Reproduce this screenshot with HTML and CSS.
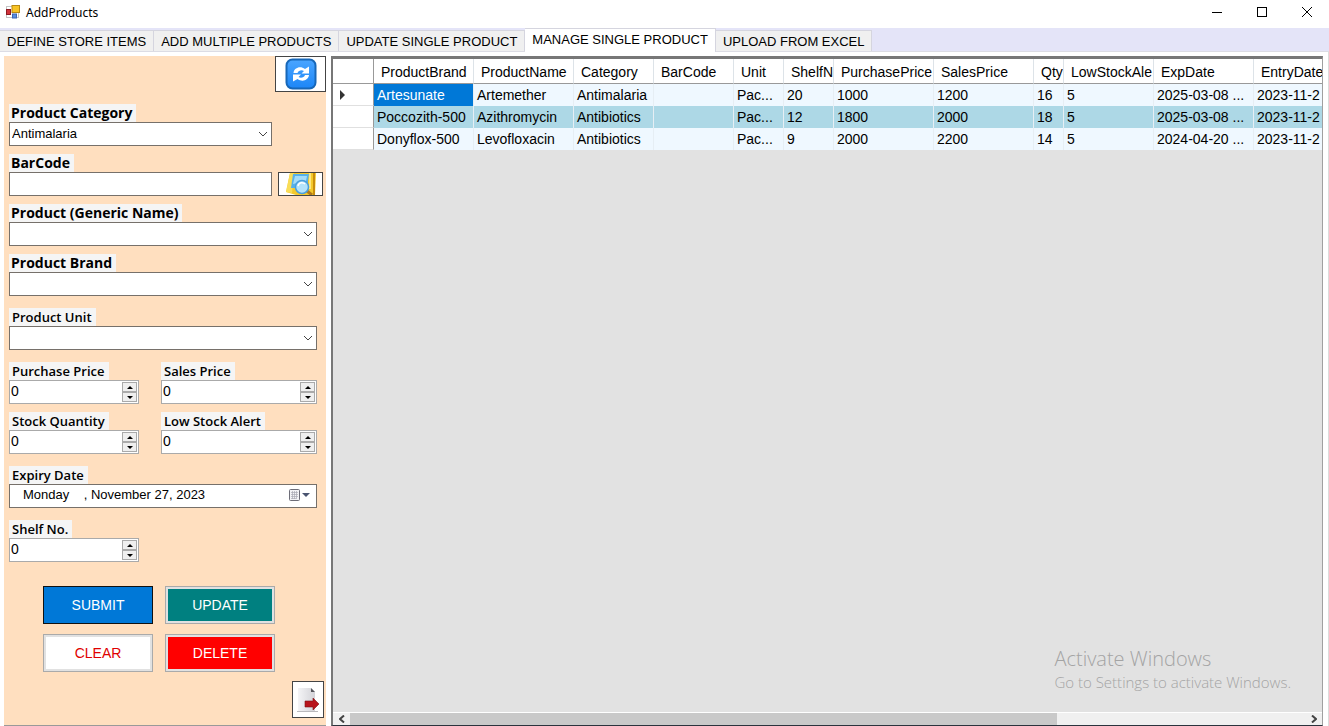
FILE: index.html
```html
<!DOCTYPE html>
<html lang="en">
<head>
  <meta charset="UTF-8">
  <title>AddProducts</title>
  <link rel="stylesheet" href="styles.css">
</head>
<body>
  <!-- Title bar -->
  <header class="titlebar">
    <svg class="app-icon" width="14" height="14" viewBox="0 0 14 14">
      <rect x="0.5" y="1.5" width="12" height="11" fill="#fff" stroke="#c4c4c4"/>
      <rect x="6" y="0.5" width="7.5" height="7" fill="#f7c325" stroke="#b98a12"/>
      <rect x="0.5" y="4.5" width="4" height="5" fill="#d2343c" stroke="#8e1b22"/>
      <rect x="6.5" y="9" width="4" height="4" fill="#5b8de0" stroke="#3a66b4"/>
    </svg>
    <h1>AddProducts</h1>
    <div class="window-buttons">
      <button type="button" aria-label="Minimize"><svg width="10" height="10"><path d="M0 5.5H10" stroke="#000"/></svg></button>
      <button type="button" aria-label="Maximize"><svg width="10" height="10"><rect x="0.5" y="0.5" width="9" height="9" fill="none" stroke="#000"/></svg></button>
      <button type="button" aria-label="Close"><svg width="10" height="10"><path d="M0 0L10 10M10 0L0 10" stroke="#000"/></svg></button>
    </div>
  </header>

  <!-- Tabs -->
  <nav class="tabs">
    <button type="button" class="tab">DEFINE STORE ITEMS</button>
    <button type="button" class="tab">ADD MULTIPLE PRODUCTS</button>
    <button type="button" class="tab">UPDATE SINGLE PRODUCT</button>
    <button type="button" class="tab active">MANAGE SINGLE PRODUCT</button>
    <button type="button" class="tab">UPLOAD FROM EXCEL</button>
  </nav>

  <main class="page">
    <!-- Product form -->
    <form class="panel">
      <button type="button" class="icon-btn refresh" aria-label="Refresh">
        <svg width="32" height="32" viewBox="0 0 32 32">
          <defs>
            <linearGradient id="blue" x1="0" y1="0" x2="0" y2="1">
              <stop offset="0" stop-color="#4aa5ff"/>
              <stop offset="1" stop-color="#1c86f7"/>
            </linearGradient>
          </defs>
          <rect x="1.5" y="1.5" width="29" height="29" rx="6" fill="url(#blue)" stroke="#1767b8" stroke-width="2"/>
          <path d="M8.500 15C9 10 15 7.500 20 11L24 8.500V15.500H16.500L19 13C16.500 11.500 13.500 12.500 12.500 15Z" fill="#fff"/>
          <path d="M24 17C23.500 22 17.500 24.500 12.500 21L8 23.500V16.500H16L13.500 19C16 20.500 19 19.500 20 17Z" fill="#fff"/>
        </svg>
      </button>

      <div class="field">
        <label class="wide" for="category">Product Category</label>
        <select id="category" class="short"><option>Antimalaria</option></select>
      </div>
      <div class="field">
        <label class="wide" for="barcode">BarCode</label>
        <div class="row">
          <input type="text" id="barcode" class="short">
          <button type="button" class="icon-btn scan" aria-label="Find barcode">
            <svg width="34" height="22" viewBox="0 0 34 22">
              <path d="M6 0H32L31 22H12L2 19Z" fill="#f4c92c"/>
              <path d="M6 0L2 19L8 20L10 0Z" fill="#f9dd58"/>
              <path d="M9 1H25L23 15H7Z" fill="#56b1ea"/>
              <path d="M11 3H23L22 8L9 11Z" fill="#a5dcf8"/>
              <path d="M26 0V16" stroke="#fff0a0" stroke-width="1.500"/>
              <path d="M30 0V22" stroke="#c98e0c" stroke-width="2"/>
              <path d="M23 18L28 22" stroke="#b07a1c" stroke-width="3"/>
              <circle cx="18" cy="14" r="6.500" fill="#b4e3fb" stroke="#4a9fdc" stroke-width="1.500"/>
              <path d="M14 13C15 9 19 9 21 11" fill="none" stroke="#fff" stroke-width="1.500"/>
            </svg>
          </button>
        </div>
      </div>
      <div class="field">
        <label class="wide" for="generic">Product (Generic Name)</label>
        <select id="generic"><option></option></select>
      </div>
      <div class="field roomy">
        <label class="wide" for="brand">Product Brand</label>
        <select id="brand"><option></option></select>
      </div>
      <div class="field roomy">
        <label for="unit">Product Unit</label>
        <select id="unit"><option></option></select>
      </div>
      <div class="pair">
        <div class="field">
          <label for="purchase">Purchase Price</label>
          <div class="spin">
            <input type="number" id="purchase" value="0">
            <div class="arrows">
              <button type="button" class="up" aria-label="Increase"></button>
              <button type="button" class="down" aria-label="Decrease"></button>
            </div>
          </div>
        </div>
        <div class="field">
          <label for="sales">Sales Price</label>
          <div class="spin">
            <input type="number" id="sales" value="0">
            <div class="arrows">
              <button type="button" class="up" aria-label="Increase"></button>
              <button type="button" class="down" aria-label="Decrease"></button>
            </div>
          </div>
        </div>
      </div>
      <div class="pair">
        <div class="field roomy">
          <label for="stock">Stock Quantity</label>
          <div class="spin">
            <input type="number" id="stock" value="0">
            <div class="arrows">
              <button type="button" class="up" aria-label="Increase"></button>
              <button type="button" class="down" aria-label="Decrease"></button>
            </div>
          </div>
        </div>
        <div class="field roomy">
          <label for="lowstock">Low Stock Alert</label>
          <div class="spin">
            <input type="number" id="lowstock" value="0">
            <div class="arrows">
              <button type="button" class="up" aria-label="Increase"></button>
              <button type="button" class="down" aria-label="Decrease"></button>
            </div>
          </div>
        </div>
      </div>
      <div class="field roomy">
        <label for="expiry">Expiry Date</label>
        <div class="date">
          <input type="text" id="expiry" value="Monday    , November 27, 2023">
          <button type="button" aria-label="Open calendar">
            <svg width="22" height="14" viewBox="0 0 22 14">
              <rect x="0.5" y="1.500" width="10" height="11" rx="1" fill="#f3f3f6" stroke="#6d6d78"/>
              <path d="M2 4.500H9M2 6.500H9M2 8.500H9M2 10.500H7M3.500 3V11M5.500 3V11M7.500 3V11" stroke="#a9a9b4" stroke-width="0.700"/>
              <path d="M13 5H21L17 9Z" fill="#4a5470"/>
            </svg>
          </button>
        </div>
      </div>
      <div class="pair">
        <div class="field">
          <label for="shelf">Shelf No.</label>
          <div class="spin">
            <input type="number" id="shelf" value="0">
            <div class="arrows">
              <button type="button" class="up" aria-label="Increase"></button>
              <button type="button" class="down" aria-label="Decrease"></button>
            </div>
          </div>
        </div>
      </div>

      <div class="actions">
        <button type="button" class="submit">SUBMIT</button>
        <button type="button" class="update">UPDATE</button>
        <button type="button" class="clear">CLEAR</button>
        <button type="button" class="delete">DELETE</button>
      </div>

      <button type="button" class="icon-btn exit" aria-label="Exit">
        <svg width="24" height="26" viewBox="0 0 24 26">
          <defs>
            <linearGradient id="paper" x1="0" y1="0" x2="1" y2="0">
              <stop offset="0" stop-color="#f4f4f6"/>
              <stop offset="1" stop-color="#d3d3d8"/>
            </linearGradient>
          </defs>
          <path d="M2 1H15L19 5V24H2Z" fill="url(#paper)"/>
          <path d="M15 1L19 5H15Z" fill="#55565c"/>
          <path d="M1 24.500H22" stroke="#b9b9bd"/>
          <path d="M9 14H17V11L23 17L17 23V20H9Z" fill="#b8141b" stroke="#7d1216" stroke-width="0.600"/>
        </svg>
      </button>
    </form>

    <!-- Products grid -->
    <section class="grid">
      <div class="grid-view">
        <table>
          <colgroup>
            <col class="w41"><col class="w100"><col class="w100"><col class="w80"><col class="w80"><col class="w50"><col class="w50">
            <col class="w100"><col class="w100"><col class="w30"><col class="w90"><col class="w100"><col class="w100">
          </colgroup>
          <thead>
            <tr>
              <th></th><th>ProductBrand</th><th>ProductName</th><th>Category</th><th>BarCode</th><th>Unit</th><th>ShelfN</th>
              <th>PurchasePrice</th><th>SalesPrice</th><th>Qty</th><th>LowStockAle</th><th>ExpDate</th><th>EntryDate</th>
            </tr>
          </thead>
          <tbody>
            <tr>
              <th><span class="current"></span></th><td class="selected">Artesunate</td><td>Artemether</td><td>Antimalaria</td><td></td><td>Pac...</td><td>20</td>
              <td>1000</td><td>1200</td><td>16</td><td>5</td><td>2025-03-08 ...</td><td>2023-11-2</td>
            </tr>
            <tr>
              <th></th><td>Poccozith-500</td><td>Azithromycin</td><td>Antibiotics</td><td></td><td>Pac...</td><td>12</td>
              <td>1800</td><td>2000</td><td>18</td><td>5</td><td>2025-03-08 ...</td><td>2023-11-2</td>
            </tr>
            <tr>
              <th></th><td>Donyflox-500</td><td>Levofloxacin</td><td>Antibiotics</td><td></td><td>Pac...</td><td>9</td>
              <td>2000</td><td>2200</td><td>14</td><td>5</td><td>2024-04-20 ...</td><td>2023-11-2</td>
            </tr>
          </tbody>
        </table>
      </div>
      <div class="scrollbar">
        <button type="button" aria-label="Scroll left"><svg width="6" height="8"><path d="M5 0.500L1 4L5 7.500" fill="none" stroke="#444" stroke-width="2"/></svg></button>
        <div class="track"><div class="thumb"></div></div>
        <button type="button" aria-label="Scroll right"><svg width="6" height="8"><path d="M1 0.500L5 4L1 7.500" fill="none" stroke="#444" stroke-width="2"/></svg></button>
      </div>
    </section>
  </main>

  <!-- Activation notice lies over the window -->
  <div class="watermark">
    <p class="big">Activate Windows</p>
    <p>Go to Settings to activate Windows.</p>
  </div>
</body>
</html>
```
FILE: styles.css
```css
*{box-sizing:border-box;}
body{margin:0;height:100vh;display:flex;flex-direction:column;overflow:hidden;background:#fff;color:#000;
  font:14px "Liberation Sans",Arial,sans-serif;}
button,input,select{font:inherit;color:inherit;margin:0;padding:0;border-radius:0;}
button{cursor:pointer;}
/* --- Title bar --- */
.titlebar{display:flex;align-items:center;height:28px;padding:0 0 4px 6px;flex:none;}
.titlebar h1{margin:0 0 0 6px;font:12px "Noto Sans","Open Sans",sans-serif;}
.window-buttons{display:flex;margin-left:auto;}
.window-buttons button{width:45px;height:24px;border:0;background:none;display:flex;align-items:center;justify-content:center;}
/* --- Tabs --- */
.tabs{display:flex;align-items:flex-end;height:24px;flex:none;background:#e4e4f8;border-bottom:1px solid #dcdce4;}
.tab{height:21px;padding:0 7px;border:1px solid #d5d5df;border-width:1px 1px 0 0;background:#f0f0f0;font-size:13px;white-space:nowrap;}
.tab.active{height:24px;margin-bottom:-1px;padding-bottom:3px;background:#fff;}
/* --- Layout --- */
.page{display:flex;flex:1;min-height:0;gap:5px;padding:4px 5px 0 4px;border-right:1px solid #dcdcdc;}
.panel{display:flex;flex-direction:column;flex:none;width:322px;padding:0 9px 8px 5px;background:#ffdfbf;border-bottom:1px solid #999;}
/* --- Fields --- */
.field{display:flex;flex-direction:column;align-items:flex-start;margin-bottom:8px;}
.field.roomy{margin-bottom:12px;}
.field label{height:18px;padding:0 4px 0 3px;background:#f5f5f5;font:600 13px/18px "Open Sans","Noto Sans",sans-serif;}
.field label.wide{font-weight:bold;padding-left:2px;font-size:14px;}
.row{display:flex;gap:6px;width:100%;}
.field select,
input[type="text"],
.spin,.date{width:100%;height:24px;border:1px solid #76706a;background-color:#fff;}
.field select.short,
input.short{width:263px;flex:none;}
select{appearance:none;padding:0 24px 2px 2px;font-size:13px;
  background:#fff url("data:image/svg+xml,%3Csvg xmlns='http://www.w3.org/2000/svg' width='10' height='6'%3E%3Cpath d='M1 1L5 5L9 1' fill='none' stroke='%23444'/%3E%3C/svg%3E") no-repeat right 3px center;}
.pair{display:grid;grid-template-columns:130px 156px;gap:22px;}
.pair .field{min-width:0;}
.spin{display:flex;padding:1px;border-color:#aaa;}
.spin input{flex:1;min-width:0;border:0;appearance:textfield;padding-bottom:2px;}
.spin input::-webkit-inner-spin-button{display:none;}
.arrows{display:flex;flex-direction:column;width:15px;}
.arrows button{flex:1;display:flex;align-items:center;justify-content:center;border:1px solid #aaa;background:#efefef;}
.arrows button::before{content:"";border:3px solid transparent;}
.arrows .up::before{border-top:0;border-bottom-color:#000;}
.arrows .down::before{border-bottom:0;border-top-color:#000;}
.date{display:flex;}
.date input[type="text"]{flex:1;min-width:0;height:auto;border:0;padding:0 0 3px 13px;font-size:13px;}
.date button{border:0;background:none;padding:0 5px 2px 0;display:flex;align-items:center;}
/* --- Icon buttons --- */
.icon-btn{display:flex;align-items:center;justify-content:center;flex:none;border:1px solid #444;background:#fff;overflow:hidden;}
.refresh{width:51px;height:36px;margin:0 -9px 12px auto;}
.scan{width:45px;height:24px;}
.exit{width:32px;height:37px;margin:9px -7px 0 auto;}
/* --- Actions --- */
.actions{display:grid;grid-template-columns:110px 110px;gap:10px 12px;margin:16px 0 0 34px;}
.actions button{height:38px;border:1px solid #aaa;box-shadow:inset 0 0 0 2px #e1e1e1;color:#fff;}
.actions .submit{background:#0078d7;border-color:#111;box-shadow:none;}
.actions .update{background:#008080;}
.actions .clear{background:#fff;color:#e00000;}
.actions .delete{background:#f00;}
/* --- Grid --- */
.grid{display:flex;flex-direction:column;flex:1;min-width:0;background:#e2e2e2;
  border:2px solid #777;border-top-width:3px;border-right:1px solid #a0a0a0;border-bottom:1px solid #2b333d;}
.grid-view{flex:1;overflow:hidden;}
table{width:1021px;table-layout:fixed;border-collapse:separate;border-spacing:0;}
.w30{width:30px;}
.w41{width:41px;}
.w50{width:50px;}
.w80{width:80px;}
.w90{width:90px;}
.w100{width:100px;}
th,td{height:22px;padding:0 3px;overflow:hidden;white-space:nowrap;text-align:left;font-weight:normal;border-right:1px solid #e6eef4;}
td{background:#eff8ff;}
thead th{height:25px;padding:2px 0 0 7px;background:#fff;border-right-color:#dde3e8;border-bottom:1px solid #999;}
tbody th{background:#fff;border-bottom:1px solid #e0e0e0;}
th:first-child{border-right-color:#999;}
tbody tr:nth-child(2) td{background:#add8e6;}
td.selected{background:#0078d7;color:#fff;}
.current{display:block;width:0;margin-left:4px;border:5px solid transparent;border-left-color:#333;border-right:0;}
/* --- Scrollbar --- */
.scrollbar{display:flex;height:13px;flex:none;background:#f0f0f0;border-top:1px solid #fff;}
.scrollbar button{width:17px;border:0;background:none;display:flex;align-items:center;justify-content:center;}
.track{flex:1;}
.thumb{width:74%;height:100%;background:#c9c9c9;}
/* --- Watermark --- */
.watermark{position:absolute;right:38px;bottom:34px;color:#a4a4a4;font:300 15px/20px "Open Sans","Noto Sans",sans-serif;pointer-events:none;}
.watermark p{margin:0;}
.watermark .big{font-size:20px;line-height:26px;}
```
